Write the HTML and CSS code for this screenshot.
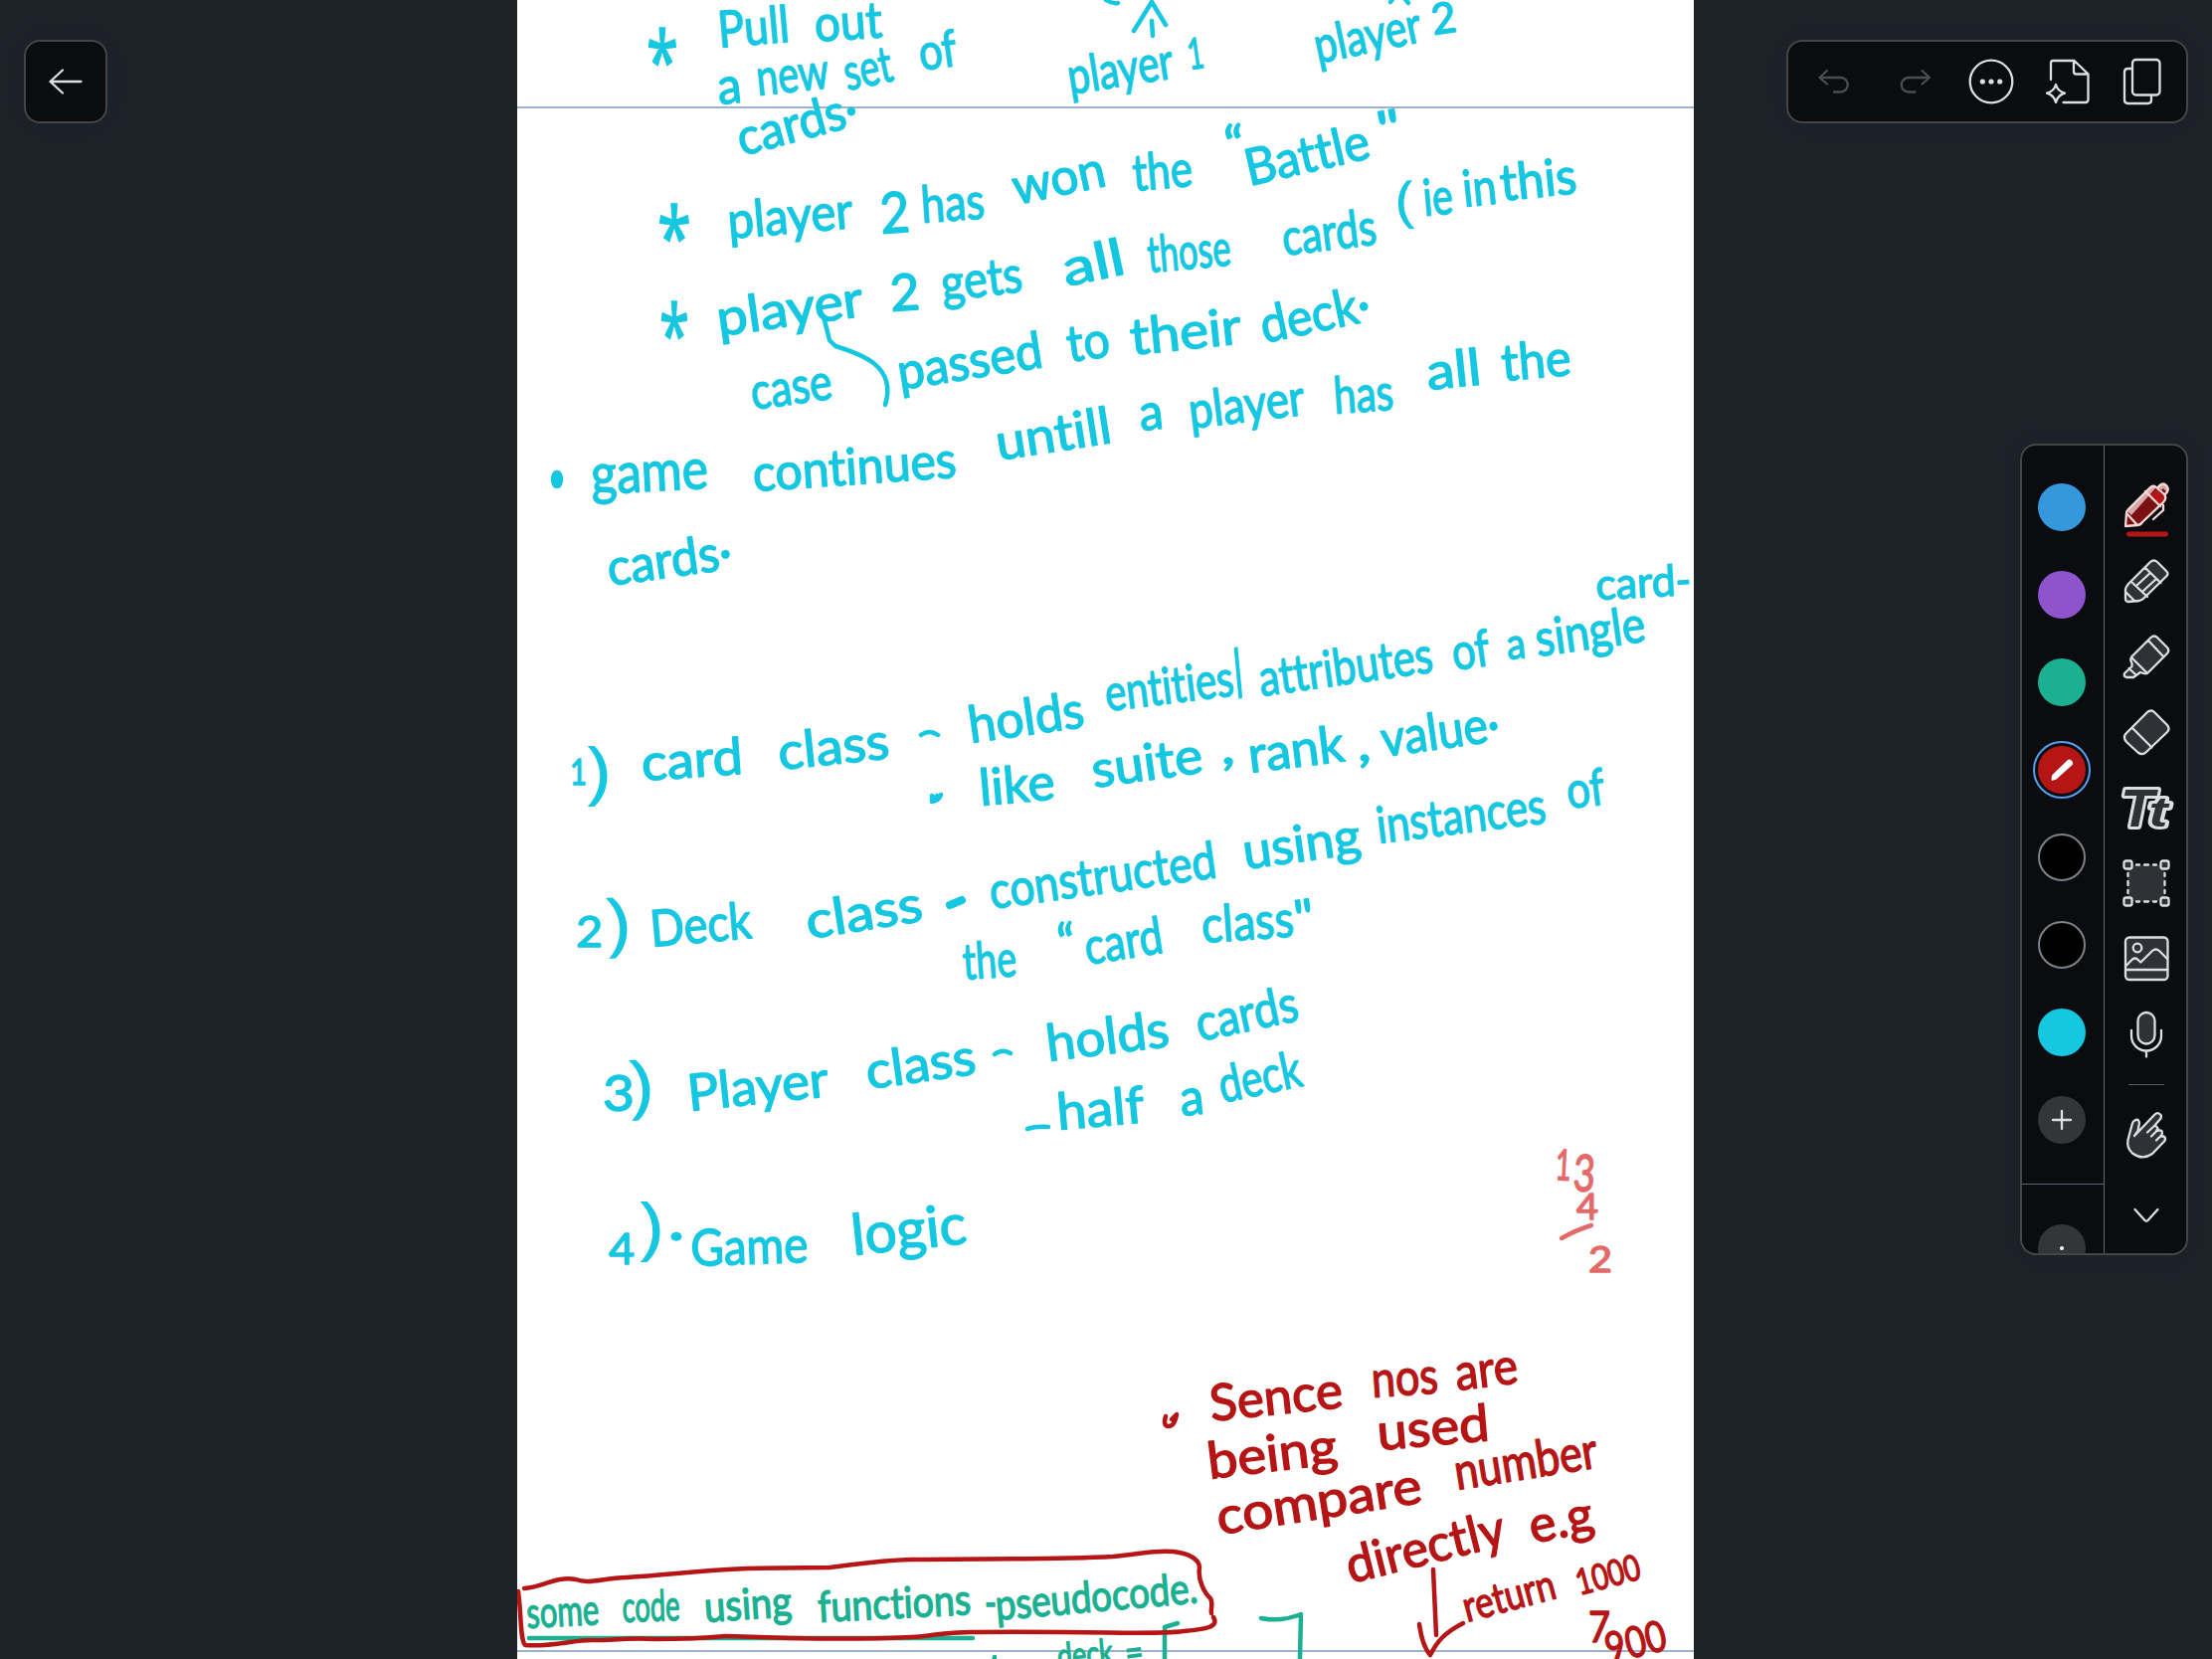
FILE: index.html
```html
<!DOCTYPE html>
<html lang="en">
<head>
<meta charset="utf-8">
<title>Notes</title>
<link rel="stylesheet" href="styles.css">
</head>
<body>
<main class="app">
  <aside class="side side-left">
    <button class="panel back" aria-label="Back">
      <svg class="ico" width="48" height="48" viewBox="0 0 48 48"><path d="M39.500 24H8.500M21 12.500 8.500 24l12.500 11.500"/></svg>
    </button>
  </aside>

  <section class="page">
    <svg class="ink" width="1183" height="1668" viewBox="520 0 1183 1668">
      <path class="rule" d="M520 108H1703M520 1660H1703"/>

      <g class="pen cyan">
        <path d="M1140 31 1158 2 1172 25M1158 21l1 15M1112 0q6 4 12 3M1398 2l3-4M1412-2l4 5"/>
        <path d="M828 318 834 342 840 348C866 356 902 368 890 407"/>
        <path d="M926 739q8-6 17 0M1000 1060q8-6 16-1M1033 1135q9-3 21-2"/>
        <path class="thick" d="M955 910l12-5"/>
        <ellipse class="dot" cx="560" cy="482" rx="4" ry="7"/>
        <path d="M937 800v6q7-1 9-7M938 804l4-4"/>
      </g>
      <g class="hand cyan">
        <text class="star" textLength="32" lengthAdjust="spacingAndGlyphs" transform="translate(650 92)">*</text>
        <text textLength="72" lengthAdjust="spacingAndGlyphs" transform="translate(723 48) rotate(-5)">Pull</text>
        <text textLength="68" lengthAdjust="spacingAndGlyphs" transform="translate(820 42) rotate(-4)">out</text>
        <text textLength="24" lengthAdjust="spacingAndGlyphs" transform="translate(723 105) rotate(-6)">a</text>
        <text textLength="73" lengthAdjust="spacingAndGlyphs" transform="translate(762 96) rotate(-6)">new</text>
        <text textLength="49" lengthAdjust="spacingAndGlyphs" transform="translate(852 91) rotate(-12)">set</text>
        <text textLength="38" lengthAdjust="spacingAndGlyphs" transform="translate(926 71) rotate(-8)">of</text>
        <text textLength="124" lengthAdjust="spacingAndGlyphs" transform="translate(746 157) rotate(-15)">cards·</text>
        <text textLength="107" lengthAdjust="spacingAndGlyphs" transform="translate(1076 95) rotate(-9)">player</text>
        <text class="small" textLength="16" lengthAdjust="spacingAndGlyphs" transform="translate(1196 70) rotate(-8)">1</text>
        <text textLength="109" lengthAdjust="spacingAndGlyphs" transform="translate(1325 64) rotate(-12)">player</text>
        <text class="small" textLength="25" lengthAdjust="spacingAndGlyphs" transform="translate(1441 35) rotate(-8)">2</text>

        <text class="star" textLength="34" lengthAdjust="spacingAndGlyphs" transform="translate(661 269)">*</text>
        <text textLength="126" lengthAdjust="spacingAndGlyphs" transform="translate(733 240) rotate(-5)">player</text>
        <text class="big" textLength="30" lengthAdjust="spacingAndGlyphs" transform="translate(886 235) rotate(-4)">2</text>
        <text textLength="64" lengthAdjust="spacingAndGlyphs" transform="translate(927 224) rotate(-4)">has</text>
        <text textLength="94" lengthAdjust="spacingAndGlyphs" transform="translate(1022 206) rotate(-12)">won</text>
        <text textLength="60" lengthAdjust="spacingAndGlyphs" transform="translate(1140 192) rotate(-5)">the</text>
        <text textLength="20" lengthAdjust="spacingAndGlyphs" transform="translate(1232 164) rotate(-4)">“</text>
        <text textLength="127" lengthAdjust="spacingAndGlyphs" transform="translate(1256 187) rotate(-13)">Battle</text>
        <text textLength="24" lengthAdjust="spacingAndGlyphs" transform="translate(1388 149) rotate(-10)">"</text>

        <text class="star" textLength="30" lengthAdjust="spacingAndGlyphs" transform="translate(663 367)">*</text>
        <text textLength="148" lengthAdjust="spacingAndGlyphs" transform="translate(723 338) rotate(-8)">player</text>
        <text textLength="30" lengthAdjust="spacingAndGlyphs" transform="translate(896 313) rotate(-4)">2</text>
        <text textLength="82" lengthAdjust="spacingAndGlyphs" transform="translate(948 303) rotate(-7)">gets</text>
        <text textLength="63" lengthAdjust="spacingAndGlyphs" transform="translate(1072 288) rotate(-12)">all</text>
        <text textLength="84" lengthAdjust="spacingAndGlyphs" transform="translate(1155 274) rotate(-5)">those</text>
        <text textLength="95" lengthAdjust="spacingAndGlyphs" transform="translate(1291 257) rotate(-7)">cards</text>
        <text class="paren low" textLength="20" lengthAdjust="spacingAndGlyphs" transform="translate(1404 222) rotate(-3)">(</text>
        <text textLength="30" lengthAdjust="spacingAndGlyphs" transform="translate(1432 217) rotate(-5)">ie</text>
        <text textLength="34" lengthAdjust="spacingAndGlyphs" transform="translate(1472 208) rotate(-6)">in</text>
        <text textLength="77" lengthAdjust="spacingAndGlyphs" transform="translate(1510 202) rotate(-6)">this</text>

        <text textLength="82" lengthAdjust="spacingAndGlyphs" transform="translate(757 412) rotate(-8)">case</text>
        <text textLength="147" lengthAdjust="spacingAndGlyphs" transform="translate(905 392) rotate(-9)">passed</text>
        <text textLength="43" lengthAdjust="spacingAndGlyphs" transform="translate(1075 364) rotate(-8)">to</text>
        <text textLength="112" lengthAdjust="spacingAndGlyphs" transform="translate(1138 357) rotate(-6)">their</text>
        <text textLength="112" lengthAdjust="spacingAndGlyphs" transform="translate(1271 345) rotate(-12)">deck·</text>

        <text class="big" textLength="118" lengthAdjust="spacingAndGlyphs" transform="translate(595 497) rotate(-3)">game</text>
        <text textLength="205" lengthAdjust="spacingAndGlyphs" transform="translate(758 494) rotate(-4)">continues</text>
        <text textLength="117" lengthAdjust="spacingAndGlyphs" transform="translate(1004 463) rotate(-9)">untill</text>
        <text textLength="24" lengthAdjust="spacingAndGlyphs" transform="translate(1147 433) rotate(-6)">a</text>
        <text textLength="117" lengthAdjust="spacingAndGlyphs" transform="translate(1197 431) rotate(-7)">player</text>
        <text textLength="60" lengthAdjust="spacingAndGlyphs" transform="translate(1342 416) rotate(-4)">has</text>
        <text textLength="55" lengthAdjust="spacingAndGlyphs" transform="translate(1436 392) rotate(-6)">all</text>
        <text textLength="70" lengthAdjust="spacingAndGlyphs" transform="translate(1511 383) rotate(-5)">the</text>
        <text textLength="126" lengthAdjust="spacingAndGlyphs" transform="translate(613 589) rotate(-8)">cards·</text>

        <text class="tiny" textLength="17" lengthAdjust="spacingAndGlyphs" transform="translate(573 789)">1</text>
        <text class="paren" textLength="26" lengthAdjust="spacingAndGlyphs" transform="translate(588 800)">)</text>
        <text textLength="102" lengthAdjust="spacingAndGlyphs" transform="translate(646 785) rotate(-4)">card</text>
        <text textLength="112" lengthAdjust="spacingAndGlyphs" transform="translate(784 774) rotate(-6)">class</text>
        <text textLength="117" lengthAdjust="spacingAndGlyphs" transform="translate(976 747) rotate(-8)">holds</text>
        <text textLength="130" lengthAdjust="spacingAndGlyphs" transform="translate(1113 715) rotate(-7)">entities</text>
        <text class="paren" textLength="18" lengthAdjust="spacingAndGlyphs" transform="translate(1245 703) rotate(-20)">/</text>
        <text textLength="176" lengthAdjust="spacingAndGlyphs" transform="translate(1268 700) rotate(-8)">attributes</text>
        <text textLength="38" lengthAdjust="spacingAndGlyphs" transform="translate(1462 674) rotate(-8)">of</text>
        <text class="small" textLength="19" lengthAdjust="spacingAndGlyphs" transform="translate(1516 663) rotate(-6)">a</text>
        <text textLength="111" lengthAdjust="spacingAndGlyphs" transform="translate(1546 660) rotate(-8)">single</text>
        <text class="small" textLength="96" lengthAdjust="spacingAndGlyphs" transform="translate(1605 603) rotate(-3)">card-</text>

        <text textLength="76" lengthAdjust="spacingAndGlyphs" transform="translate(986 810) rotate(-5)">like</text>
        <text textLength="112" lengthAdjust="spacingAndGlyphs" transform="translate(1100 792) rotate(-8)">suite</text>
        <text textLength="14" lengthAdjust="spacingAndGlyphs" transform="translate(1228 768)">,</text>
        <text textLength="97" lengthAdjust="spacingAndGlyphs" transform="translate(1257 777) rotate(-7)">rank</text>
        <text textLength="14" lengthAdjust="spacingAndGlyphs" transform="translate(1365 765)">,</text>
        <text textLength="120" lengthAdjust="spacingAndGlyphs" transform="translate(1391 761) rotate(-8)">value·</text>

        <text class="small" textLength="27" lengthAdjust="spacingAndGlyphs" transform="translate(579 952)">2</text>
        <text class="paren" textLength="26" lengthAdjust="spacingAndGlyphs" transform="translate(609 953) rotate(-3)">)</text>
        <text textLength="102" lengthAdjust="spacingAndGlyphs" transform="translate(655 952) rotate(-5)">Deck</text>
        <text textLength="118" lengthAdjust="spacingAndGlyphs" transform="translate(813 944) rotate(-9)">class</text>
        <text textLength="230" lengthAdjust="spacingAndGlyphs" transform="translate(997 914) rotate(-8)">constructed</text>
        <text textLength="119" lengthAdjust="spacingAndGlyphs" transform="translate(1252 874) rotate(-8)">using</text>
        <text textLength="171" lengthAdjust="spacingAndGlyphs" transform="translate(1386 848) rotate(-7)">instances</text>
        <text textLength="38" lengthAdjust="spacingAndGlyphs" transform="translate(1577 813) rotate(-7)">of</text>
        <text textLength="54" lengthAdjust="spacingAndGlyphs" transform="translate(969 985) rotate(-4)">the</text>
        <text textLength="18" lengthAdjust="spacingAndGlyphs" transform="translate(1064 966) rotate(-4)">“</text>
        <text textLength="79" lengthAdjust="spacingAndGlyphs" transform="translate(1093 970) rotate(-9)">card</text>
        <text textLength="93" lengthAdjust="spacingAndGlyphs" transform="translate(1209 948) rotate(-4)">class</text>
        <text textLength="20" lengthAdjust="spacingAndGlyphs" transform="translate(1304 942) rotate(-8)">"</text>

        <text textLength="32" lengthAdjust="spacingAndGlyphs" transform="translate(606 1117)">3</text>
        <text class="paren" textLength="26" lengthAdjust="spacingAndGlyphs" transform="translate(632 1116) rotate(-3)">)</text>
        <text textLength="142" lengthAdjust="spacingAndGlyphs" transform="translate(693 1117) rotate(-6)">Player</text>
        <text textLength="111" lengthAdjust="spacingAndGlyphs" transform="translate(873 1095) rotate(-8)">class</text>
        <text textLength="124" lengthAdjust="spacingAndGlyphs" transform="translate(1054 1067) rotate(-7)">holds</text>
        <text textLength="104" lengthAdjust="spacingAndGlyphs" transform="translate(1206 1047) rotate(-12)">cards</text>
        <text textLength="88" lengthAdjust="spacingAndGlyphs" transform="translate(1064 1136) rotate(-5)">half</text>
        <text textLength="24" lengthAdjust="spacingAndGlyphs" transform="translate(1188 1122) rotate(-6)">a</text>
        <text textLength="84" lengthAdjust="spacingAndGlyphs" transform="translate(1229 1109) rotate(-12)">deck</text>

        <text class="small" textLength="26" lengthAdjust="spacingAndGlyphs" transform="translate(612 1271)">4</text>
        <text class="paren" textLength="26" lengthAdjust="spacingAndGlyphs" transform="translate(641 1258)">)</text>
        <text textLength="16" lengthAdjust="spacingAndGlyphs" transform="translate(672 1258)">·</text>
        <text textLength="118" lengthAdjust="spacingAndGlyphs" transform="translate(695 1273) rotate(-2)">Game</text>
        <text class="big" textLength="116" lengthAdjust="spacingAndGlyphs" transform="translate(858 1262) rotate(-6)">logic</text>
      </g>

      <g class="hand rose">
        <text class="small" textLength="16" lengthAdjust="spacingAndGlyphs" transform="translate(1563 1186) rotate(3)">1</text>
        <text textLength="22" lengthAdjust="spacingAndGlyphs" transform="translate(1581 1197) rotate(3)">3</text>
        <text class="tiny" textLength="22" lengthAdjust="spacingAndGlyphs" transform="translate(1585 1226)">4</text>
        <text class="tiny" textLength="24" lengthAdjust="spacingAndGlyphs" transform="translate(1597 1279)">2</text>
      </g>
      <g class="pen rose"><path d="M1570 1245q14-8 30-13"/></g>

      <g class="hand green">
        <text class="small" textLength="73" lengthAdjust="spacingAndGlyphs" transform="translate(530 1637) rotate(-3)">some</text>
        <text class="small" textLength="58" lengthAdjust="spacingAndGlyphs" transform="translate(626 1631) rotate(-2)">code</text>
        <text class="small" textLength="88" lengthAdjust="spacingAndGlyphs" transform="translate(709 1631) rotate(-4)">using</text>
        <text class="small" textLength="154" lengthAdjust="spacingAndGlyphs" transform="translate(823 1631) rotate(-3)">functions</text>
        <text class="small" textLength="12" lengthAdjust="spacingAndGlyphs" transform="translate(990 1626)">-</text>
        <text class="small" textLength="204" lengthAdjust="spacingAndGlyphs" transform="translate(1002 1629) rotate(-5)">pseudocode.</text>
        <text class="tiny" textLength="56" lengthAdjust="spacingAndGlyphs" transform="translate(1064 1678) rotate(-5)">deck</text>
        <text class="tiny" textLength="18" lengthAdjust="spacingAndGlyphs" transform="translate(1133 1675) rotate(-8)">=</text>
      </g>
      <g class="pen green">
        <path d="M532 1647H978M1184 1632l-13 4v34M1268 1627q20 4 40-4l-1 44M1000 1666l-1 4"/>
      </g>

      <g class="pen red">
        <path d="M527 1597C545 1596 560 1584 579 1588 592 1593 604 1587 630 1586 670 1584 700 1579 751 1577L834 1576C860 1573 880 1569 916 1568 1000 1567 1060 1568 1119 1565 1145 1563 1160 1558 1180 1560 1196 1562 1206 1568 1206 1576 1204 1588 1211 1602 1217 1607 1220 1612 1217 1618 1218 1622M1220 1626C1226 1636 1212 1638 1190 1640 1160 1644 1120 1640 982 1641 950 1640 940 1645 916 1646 850 1649 790 1647 729 1645 700 1648 680 1648 658 1648 630 1646 610 1650 595 1649 575 1649 555 1656 528 1654 523 1650 524 1620 521 1600"/>
        <path d="M1441 1578 1444 1644M1427 1633Q1430 1655 1438 1664C1445 1650 1452 1642 1471 1632M1172 1424q-3 10 3 10 6 0 8-12l-5 5"/>
      </g>
      <g class="hand red">
        <text textLength="134" lengthAdjust="spacingAndGlyphs" transform="translate(1218 1429) rotate(-6)">Sence</text>
        <text textLength="67" lengthAdjust="spacingAndGlyphs" transform="translate(1380 1405) rotate(-4)">nos</text>
        <text textLength="63" lengthAdjust="spacingAndGlyphs" transform="translate(1465 1398) rotate(-7)">are</text>
        <text textLength="131" lengthAdjust="spacingAndGlyphs" transform="translate(1216 1487) rotate(-7)">being</text>
        <text textLength="113" lengthAdjust="spacingAndGlyphs" transform="translate(1386 1458) rotate(-5)">used</text>
        <text textLength="208" lengthAdjust="spacingAndGlyphs" transform="translate(1226 1543) rotate(-9)">compare</text>
        <text textLength="145" lengthAdjust="spacingAndGlyphs" transform="translate(1465 1498) rotate(-9)">number</text>
        <text textLength="163" lengthAdjust="spacingAndGlyphs" transform="translate(1358 1592) rotate(-14)">directly</text>
        <text textLength="65" lengthAdjust="spacingAndGlyphs" transform="translate(1541 1552) rotate(-12)">e.g</text>
        <text class="small" textLength="95" lengthAdjust="spacingAndGlyphs" transform="translate(1475 1631) rotate(-15)">return</text>
        <text class="tiny" textLength="66" lengthAdjust="spacingAndGlyphs" transform="translate(1588 1604) rotate(-15)">1000</text>
        <text class="small" textLength="22" lengthAdjust="spacingAndGlyphs" transform="translate(1597 1651)">7</text>
        <text class="small" textLength="62" lengthAdjust="spacingAndGlyphs" transform="translate(1618 1673) rotate(-14)">900</text>
      </g>
    </svg>
  </section>

  <aside class="side side-right">
    <nav class="panel topbar">
      <svg class="ico dim" width="48" height="48" viewBox="0 0 48 48"><path d="M13 13 5.500 20l7.500 6.500M6 20H26.500a7.200 7.200 0 0 1 0 14.500h-6.500"/></svg>
      <svg class="ico dim" width="48" height="48" viewBox="0 0 48 48"><path d="m31.500 13 7.500 7-7.500 6.500M38.500 20H18a7.200 7.200 0 0 0 0 14.500h6.500"/></svg>
      <svg class="ico" width="48" height="48" viewBox="0 0 48 48"><circle cx="25" cy="24" r="21.300"/><g class="solid"><circle cx="16.300" cy="24" r="2.600"/><circle cx="25" cy="24" r="2.600"/><circle cx="33.700" cy="24" r="2.600"/></g></svg>
      <svg class="ico" width="48" height="48" viewBox="0 0 48 48"><path d="M8 22V5Q8 3 10 3H31.500L45.500 16.500V42Q45.500 45 42.500 45H20.500M31 3V14Q31 16.500 33.500 16.500H45.500M13 27Q15 34 22 35.700 15 37.500 13 45 11 37.500 4 35.700 11 34 13 27Z"/></svg>
      <svg class="ico" width="48" height="48" viewBox="0 0 48 48"><rect x="14" y="2" width="27.500" height="35.500" rx="3.500"/><path d="M13.500 11H9.500Q6 11 6 14.500V42.500Q6 46 9.500 46H29.500Q33 46 33 42.500V38"/></svg>
    </nav>

    <section class="panel tools">
      <div class="colors">
        <span class="swatch blue"></span>
        <span class="swatch purple"></span>
        <span class="swatch teal"></span>
        <span class="swatch crimson selected"><svg width="48" height="48" viewBox="0 0 48 48"><path class="nib" d="M13.500 34 14 29.500 29.500 14.500Q31.500 12.500 33.500 14.500L34.500 15.500Q36 17.500 34 19.500L18.500 33.500 14 35Z"/></svg></span>
        <span class="swatch black"></span>
        <span class="swatch black"></span>
        <span class="swatch aqua"></span>
        <span class="swatch grey"><svg class="ico" width="48" height="48" viewBox="0 0 48 48"><path d="M24 15v18M15 24h18"/></svg></span>
        <div class="sizes"><span class="swatch grey"><i class="point"></i></span></div>
      </div>
      <div class="kit">
        <span class="tool"><svg class="ico pen-on" width="48" height="48" viewBox="0 0 48 48">
          <path class="bright" d="M35 5Q39 0 43 3.500 48 8 43.500 13Z"/><path class="maroon" d="m41 7 4 4-2 2-4-4Z"/>
          <path class="maroon" d="M3 45 4 32Q4 30 6 28L27 7Q31 3 34 6L42 13Q45 17 41 21L20 41Q18 44 15 44Z"/>
          <path class="pink" d="M5 30 27 7Q31 3 34 6L9 34Z"/><path class="red" d="m28 14 6-6 9 8-5 8Z"/>
          <path d="M3 45 4 32Q4 30 6 28L27 7Q31 3 34 6L42 13Q45 17 41 21L20 41Q18 44 15 44ZM23 10 38 25M4 32 15 44M41 24V29L31 38M36 6Q40 0 44 4 48 8 43 13"/>
          <rect class="bar" x="4" y="50.500" width="42" height="5" rx="2.500"/></svg></span>
        <span class="tool"><svg class="ico fill" width="48" height="48" viewBox="0 0 48 48"><path d="M3 42V33Q3 30 7 26L28 5Q31.500 2 35 5L44 14Q47 17 44 19.500L22 41Q20 43 17 44L6 45Q3 45 3 42ZM22.500 10.500 38.500 26M9 25 25 40M28 16 15 28M34 22 21 34M4 36 12 44"/></svg></span>
        <span class="tool"><svg class="ico fill" width="48" height="48" viewBox="0 0 48 48"><path d="M9.500 24 28.500 5Q32 2 35 5L45 15Q47.500 18 45 21L26 40Q24 42 21 41L18 40 11 45H4Q1 44 2 41L9.500 34V31Q7 27 9.500 24ZM26 8 41 24M9 25 25 41M6.500 36 14 43"/></svg></span>
        <span class="tool"><svg class="ico fill" width="48" height="48" viewBox="0 0 48 48"><path d="M25 4Q29 1 32 4L45 17Q48 21 45 24L24 44Q20 48 15.500 44.500L4 34Q0 29 3.500 25.500ZM10 20 29.500 39.500"/></svg></span>
        <span class="tool"><svg class="ico fill" width="48" height="48" viewBox="0 0 48 48"><g class="tt"><text x="-2" y="42.500" font-size="54" textLength="34" lengthAdjust="spacingAndGlyphs">T</text><text x="26.500" y="42.500" font-size="42" textLength="19" lengthAdjust="spacingAndGlyphs">t</text></g></svg></span>
        <span class="tool"><svg class="ico fill" width="48" height="48" viewBox="0 0 48 48"><rect class="nostroke" x="5.500" y="5.500" width="37" height="37"/><path d="M14 5.500h3M22 5.500h4M31 5.500h3M14 42.500h3M22 42.500h4M31 42.500h3M5.500 14v3M5.500 22v4M5.500 31v3M42.500 14v3M42.500 22v4M42.500 31v3"/><rect x="1.500" y="1.500" width="8" height="8" rx="2"/><rect x="38.500" y="1.500" width="8" height="8" rx="2"/><rect x="1.500" y="38.500" width="8" height="8" rx="2"/><rect x="38.500" y="38.500" width="8" height="8" rx="2"/></svg></span>
        <span class="tool"><svg class="ico fill" width="48" height="48" viewBox="0 0 48 48"><rect x="3" y="2.500" width="42.500" height="42.500" rx="4"/><circle cx="15" cy="13" r="4.300"/><path class="hollow" d="M3.500 31 10 24.500Q12.500 22.500 15 24.500L18.300 27.500 30 16Q33.500 13 37 16L45 24M3 35H45"/></svg></span>
        <span class="tool"><svg class="ico fill" width="48" height="48" viewBox="0 0 48 48"><rect x="15.500" y="2" width="17" height="31.500" rx="8.500"/><path class="hollow" d="M9 20v5.500a15 15 0 0 0 30 0V20M24 41v5.500"/></svg></span>
        <hr class="split">
        <span class="tool"><svg class="ico fill" width="48" height="48" viewBox="0 0 48 48"><path d="M12 25 15.500 20 17 12Q16 7 12.500 9.500 10.500 10 9.500 14L5.500 29Q4 37 10 42.500 20 50 30 43L42.500 30Q44 27 41.500 25.500L38 25.500 39.500 24Q41 19 37 19.500L34 20 35.500 17.500Q34 14.500 32 15L38.500 7.500Q40 4 36.500 2.500 34.500 1.500 32 4L12 25M32 15 25 21.500M35 19.500 29 25.500M38.500 25 34 29.500"/></svg></span>
        <svg class="ico chevron" width="48" height="48" viewBox="0 0 48 48"><path d="M12.500 18 22.500 29Q24 30.500 25.500 29L35.500 18"/></svg>
      </div>
    </section>
  </aside>
</main>
</body>
</html>
```
FILE: styles.css
```css
* { box-sizing: border-box; }
body { margin: 0; background: #1e2229; font-family: "Liberation Sans", sans-serif; }
.app { display: grid; grid-template-columns: 520px 1183px 521px; height: 1668px; overflow: hidden; }
.side { padding-top: 40px; }
.side-left { padding-left: 24px; }
.side-right { display: flex; flex-direction: column; align-items: flex-end; padding-right: 24px; gap: 322px; }
.page { background: #fff; overflow: hidden; }
.ink { display: block; }

.panel { background: #0b0c0f; border: 2px solid #454648; border-radius: 16px; box-shadow: 0 0 28px rgba(24, 32, 40, .5); }
.back { display: flex; align-items: center; justify-content: center; width: 84px; height: 84px; padding: 0; }
.topbar { display: flex; align-items: center; justify-content: space-between; width: 404px; height: 84px; padding: 0 20px 0 26px; }
.tools { display: flex; width: 169px; height: 816px; overflow: hidden; }

.ico { fill: none; stroke: #dcdee1; stroke-width: 2.3; stroke-linecap: round; stroke-linejoin: round; overflow: visible; flex: none; }
.ico.dim { stroke: #4b4c50; }
.ico.fill { fill: #303136; }
.solid { fill: #dcdee1; stroke: none; }
.ico .hollow { fill: none; }
.ico .nostroke { stroke: none; }

.colors { display: flex; flex-direction: column; align-items: center; gap: 40px; width: 83px; padding-top: 38px; border-right: 1px solid #5f6775; }
.swatch { display: flex; align-items: center; justify-content: center; flex: none; width: 48px; height: 48px; margin-right: 2px; border-radius: 50%; }
.blue { background: #3498dc; }
.purple { background: #8d54ce; }
.teal { background: #1bb091; }
.crimson { background: #b61515; }
.black { background: #000; border: 2px solid #7d8289; }
.aqua { background: #15c7e0; }
.grey { background: #343539; }
.selected { outline: 2px solid #569fee; outline-offset: 3px; }
.nib { fill: #fff; }
.sizes { display: flex; justify-content: center; width: 100%; border-top: 1px solid #5f6775; padding-top: 40px; }
.point { width: 4px; height: 4px; border-radius: 50%; background: #fff; }

.kit { display: flex; flex-direction: column; align-items: center; flex: 1; padding: 22px 0 0 2px; }
.tool { display: flex; align-items: center; justify-content: center; flex: none; height: 76px; }
.split { width: 36px; height: 1px; margin: 12px 0; border: 0; background: #56585e; flex: none; }
.chevron { margin-top: 19px; }
.pen-on { stroke: #f7d9d9; }
.maroon { fill: #7b0f12; stroke: none; }
.bright { fill: #d5a9a9; stroke: none; }
.pink { fill: #d5a9a9; stroke: none; }
.pen-on .red, .bar { fill: #b61515; stroke: none; }
.tt { font-family: "Liberation Sans", sans-serif; font-weight: bold; font-style: italic; stroke-width: 6; stroke-linejoin: round; paint-order: stroke; }

.rule { stroke: #9fb1d2; stroke-width: 2; }
.hand { font-family: Lato, sans-serif; font-size: 51px; font-weight: 400; font-variant-ligatures: none; stroke-width: 1.4; stroke-linejoin: round; }
.hand .small { font-size: 43px; }
.hand .tiny { font-size: 36px; }
.hand .big { font-size: 57px; }
.hand .star { font-family: "Noto Sans", sans-serif; font-size: 84px; }
.hand .paren { font-family: "Open Sans", sans-serif; font-size: 70px; stroke-width: 0; }
.hand .low { font-size: 56px; }
.hand.cyan { fill: #15c7e0; stroke: #15c7e0; }
.hand.rose { fill: #e46a6a; stroke: #e46a6a; }
.hand.green { fill: #1bb091; stroke: #1bb091; }
.hand.red { fill: #b61515; stroke: #b61515; }
.pen { fill: none; stroke-width: 4.5; stroke-linecap: round; stroke-linejoin: round; }
.pen.cyan { stroke: #15c7e0; }
.pen.rose { stroke: #e46a6a; }
.pen.green { stroke: #1bb091; }
.pen.red { stroke: #b61515; }
.pen .thick { stroke-width: 8; }
.dot { fill: #15c7e0; }
```
